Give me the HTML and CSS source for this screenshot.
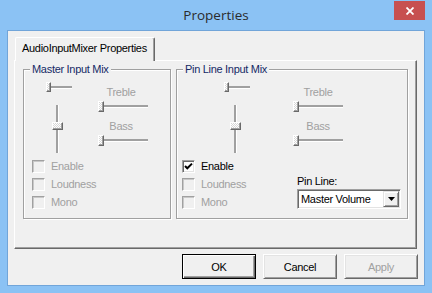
FILE: index.html
```html
<!DOCTYPE html>
<html>
<head>
  <title>Properties</title>
  <link rel="stylesheet" href="styles.css">
</head>
<body>
  <div class="window">
    <div class="titlebar">
      <span class="title">Properties</span>
      <div class="close">
        <svg width="8" height="8" viewBox="0 0 8 8"><path d="M0.5 0.5 L7.5 7.5 M7.5 0.5 L0.5 7.5" stroke="#fff" stroke-width="1.8"/></svg>
      </div>
    </div>

    <div class="client">
      <div class="tabs">
        <div class="tab">AudioInputMixer Properties</div>
      </div>

      <div class="page">
        <fieldset class="group master">
          <legend>Master Input Mix</legend>
          <div class="mix">
            <div class="levels">
              <div class="hslider small"><span class="thumb"></span><span class="track"></span></div>
              <div class="vslider"><span class="track upper"></span><span class="thumb"></span><span class="track lower"></span></div>
            </div>
            <div class="tone">
              <p class="caption treble">Treble</p>
              <div class="hslider"><span class="thumb"></span><span class="track"></span></div>
              <p class="caption bass">Bass</p>
              <div class="hslider"><span class="thumb"></span><span class="track"></span></div>
            </div>
          </div>
          <div class="checks">
            <label class="check off"><span class="box"></span>Enable</label>
            <label class="check off"><span class="box"></span>Loudness</label>
            <label class="check off"><span class="box"></span>Mono</label>
          </div>
        </fieldset>

        <fieldset class="group pin">
          <legend>Pin Line Input Mix</legend>
          <div class="mix">
            <div class="levels">
              <div class="hslider small"><span class="thumb"></span><span class="track"></span></div>
              <div class="vslider"><span class="track upper"></span><span class="thumb"></span><span class="track lower"></span></div>
            </div>
            <div class="tone">
              <p class="caption treble">Treble</p>
              <div class="hslider"><span class="thumb"></span><span class="track"></span></div>
              <p class="caption bass">Bass</p>
              <div class="hslider"><span class="thumb"></span><span class="track"></span></div>
            </div>
          </div>
          <div class="bottom">
            <div class="checks">
              <label class="check"><span class="box">
                <svg width="11" height="11" viewBox="0 0 11 11"><path d="M2 5 L4.3 7.3 L9 2.6" fill="none" stroke="#000" stroke-width="2"/></svg>
              </span>Enable</label>
              <label class="check off"><span class="box"></span>Loudness</label>
              <label class="check off"><span class="box"></span>Mono</label>
            </div>
            <div class="pinline">
              <p>Pin Line:</p>
              <div class="combo">
                <span class="value">Master Volume</span>
                <span class="drop">
                  <svg width="7" height="4" viewBox="0 0 7 4"><path d="M0 0 H7 L3.5 4 Z" fill="#000"/></svg>
                </span>
              </div>
            </div>
          </div>
        </fieldset>
      </div>

      <div class="buttons">
        <button class="btn default">OK</button>
        <button class="btn">Cancel</button>
        <button class="btn" disabled>Apply</button>
      </div>
    </div>
  </div>
</body>
</html>
```

FILE: styles.css
```css
body {
  margin: 0;
  font-family: "Liberation Sans", Arial, sans-serif;
  font-size: 11px;
  letter-spacing: -0.3px;
  background: #8bc2f4;
}

p {
  margin: 0;
}

.window {
  width: 432px;
  height: 293px;
  box-sizing: border-box;
  padding: 0 7px 7px 7px;
  background: #8bc2f4;
}

/* title bar */
.titlebar {
  position: relative;
  height: 30px;
  text-align: center;
}

.title {
  font-family: "Open Sans", "Noto Sans", sans-serif;
  font-size: 13.5px;
  letter-spacing: 0;
  line-height: 30px;
  color: #2b2b2b;
}

.close {
  position: absolute;
  top: 1px;
  right: 0;
  width: 31px;
  height: 19px;
  background: #c75050;
  display: flex;
  align-items: center;
  justify-content: center;
}

/* client area */
.client {
  height: 256px;
  box-sizing: border-box;
  background: #f0f0f0;
  border: 1px solid #71a5d9;
}

.tabs {
  display: flex;
  padding: 6px 0 0 7px;
}

.tab {
  position: relative;
  z-index: 1;
  width: 140px;
  height: 24px;
  box-sizing: border-box;
  margin-bottom: -1px;
  padding: 4px 0 0 6px;
  line-height: 13px;
  background: #f0f0f0;
  border: 1px solid;
  border-color: #fff #696969 transparent #fff;
  border-bottom: 0;
  border-radius: 2px 2px 0 0;
  box-shadow: inset -1px 0 #a0a0a0;
  color: #000;
}

.page {
  display: flex;
  align-items: flex-start;
  gap: 5px;
  height: 189px;
  box-sizing: border-box;
  margin: 0 7px 0 6px;
  padding: 2px 0 0 8px;
  border: 1px solid;
  border-color: #fff #696969 #696969 #fff;
  box-shadow: inset -1px -1px #a0a0a0;
}

/* group boxes */
.group {
  margin: 0;
  padding: 0;
  min-width: 0;
  height: 156px;
  box-sizing: border-box;
  border: 1px solid #a0a0a0;
  box-shadow: 1px 1px 0 #fff, inset 1px 1px 0 #fff;
}

.group legend {
  margin-left: 6px;
  padding: 0 2px;
  line-height: 13px;
  background: #f0f0f0;
  color: #152a66;
}

.master {
  width: 148px;
}

.pin {
  width: 232px;
}

.mix {
  display: flex;
  align-items: flex-start;
}

.levels {
  margin-top: 6px;
  width: 26px;
}

.master .levels {
  margin-left: 22px;
}

.pin .levels {
  margin-left: 47px;
}

.tone {
  width: 50px;
  margin-top: 10px;
}

.master .tone {
  margin-left: 26px;
}

.pin .tone {
  margin-left: 43px;
}

.caption {
  line-height: 13px;
  text-align: center;
  color: #a0a0a0;
}

.master .caption {
  padding-right: 4px;
}

.caption.bass {
  margin-top: 8px;
}

.tone .hslider {
  margin-top: 2px;
}

/* track bars */
.hslider {
  display: flex;
  align-items: center;
}

.thumb {
  display: block;
  box-sizing: border-box;
  width: 6px;
  height: 11px;
  border: 1px solid;
  border-color: #fff #696969 #696969 #fff;
  box-shadow: inset -1px -1px #a0a0a0;
  background: repeating-conic-gradient(#fff 0 25%, #d8d8d8 0 50%) 0 0 / 2px 2px;
}

.hslider .track {
  display: block;
  width: 44px;
  height: 3px;
  box-sizing: border-box;
  border-top: 2px solid #a0a0a0;
  border-bottom: 1px solid #fff;
}

.small .thumb {
  width: 5px;
  height: 10px;
}

.small .track {
  width: 21px;
}

.vslider {
  display: flex;
  flex-direction: column;
  align-items: center;
  width: 11px;
  margin: 13px 0 0 6px;
}

.vslider .track {
  display: block;
  width: 3px;
  box-sizing: border-box;
  border-left: 2px solid #a0a0a0;
  border-right: 1px solid #fff;
}

.vslider .upper {
  height: 17px;
}

.vslider .lower {
  height: 23px;
}

.vslider .thumb {
  width: 11px;
  height: 8px;
}

/* check boxes */
.checks {
  margin-top: 4px;
}

.master .checks {
  margin-left: 8px;
}

.check {
  display: flex;
  align-items: center;
  gap: 6px;
  height: 18px;
  color: #000;
}

.check .box {
  display: block;
  width: 13px;
  height: 13px;
  box-sizing: border-box;
  border: 1px solid;
  border-color: #a0a0a0 #fff #fff #a0a0a0;
  box-shadow: inset 1px 1px #696969, inset -1px -1px #e3e3e3;
  background: #fff;
}

.check .box svg {
  display: block;
}

.check.off {
  color: #a0a0a0;
}

.check.off .box {
  background: #f0f0f0;
  box-shadow: inset 1px 1px #c8c8c8;
}

.bottom {
  display: flex;
}

.pin .checks {
  margin-left: 5px;
  width: 115px;
}

.pinline {
  margin-top: 22px;
}

.pinline p {
  line-height: 13px;
  color: #000;
}

.combo {
  display: flex;
  align-items: center;
  width: 104px;
  height: 20px;
  box-sizing: border-box;
  margin-top: 1px;
  border: 1px solid;
  border-color: #a0a0a0 #fff #fff #a0a0a0;
  box-shadow: inset 1px 1px #696969, inset -1px -1px #e3e3e3;
  background: #fff;
  padding: 1px;
}

.combo .value {
  padding-left: 2px;
  color: #000;
}

.combo .drop {
  display: flex;
  align-items: center;
  justify-content: center;
  margin-left: auto;
  width: 16px;
  height: 16px;
  box-sizing: border-box;
  border: 1px solid;
  border-color: #e3e3e3 #696969 #696969 #e3e3e3;
  box-shadow: inset 1px 1px #fff, inset -1px -1px #a0a0a0;
  background: #f0f0f0;
}

/* dialog buttons */
.buttons {
  display: flex;
  justify-content: flex-end;
  gap: 7px;
  margin-top: 5px;
  padding-right: 6px;
}

.btn {
  width: 74px;
  height: 25px;
  box-sizing: border-box;
  padding: 0;
  font-family: inherit;
  font-size: 11px;
  letter-spacing: -0.3px;
  color: #000;
  background: #f0f0f0;
  border: 1px solid;
  border-color: #fff #696969 #696969 #fff;
  box-shadow: inset 1px 1px #e3e3e3, inset -1px -1px #a0a0a0;
}

.btn.default {
  border-color: #000;
  box-shadow: inset 1px 1px #fff, inset -1px -1px #696969, inset -2px -2px #a0a0a0;
}

.btn:disabled {
  color: #a0a0a0;
}
```
